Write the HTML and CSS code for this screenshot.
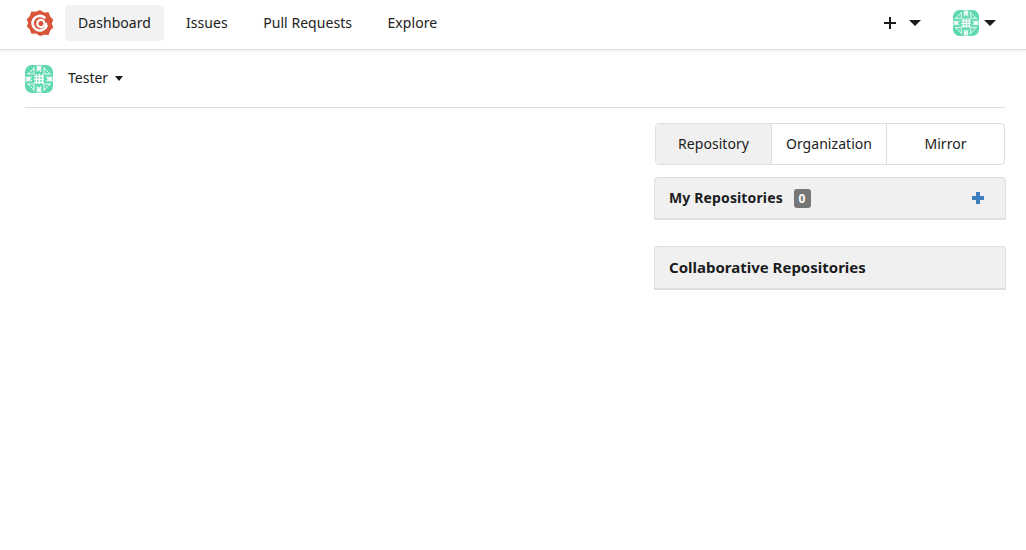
FILE: index.html
```html
<!DOCTYPE html>
<html lang="en">
<head>
  <meta charset="UTF-8" />
  <title>Dashboard</title>
  <link rel="stylesheet" href="styles.css">
</head>
<body>

<svg class="defs" width="0" height="0">
  <symbol id="avatar" viewBox="0 0 28 28">
    <rect width="28" height="28" rx="7" fill="#5fd9b0"/>
    <g id="avatar-quarter" fill="none" stroke="#fff" stroke-width="0.9">
      <path d="M9 2L9 9L2 9"/>
      <path d="M9 3L3 9"/>
      <path d="M0 12H7L3 16z" fill="#fff" opacity=".7"/>
      <path d="M12 0V7L16 3z" fill="#fff" opacity=".7"/>
    </g>
    <use href="#avatar-quarter" transform="matrix(-1 0 0 1 28 0)"/>
    <use href="#avatar-quarter" transform="matrix(1 0 0 -1 0 28)"/>
    <use href="#avatar-quarter" transform="matrix(-1 0 0 -1 28 28)"/>
    <g fill="#fff">
      <path d="M9 9h10v10H9z" opacity=".3"/>
      <path d="M11 9h1v10h-1zM14 9h1v10h-1zM17 9h1v10h-1z"/>
      <path d="M9 11h10v1H9zM9 14h10v1H9zM9 17h10v1H9z"/>
    </g>
  </symbol>
</svg>

<header class="navbar">
  <div class="nav-left">
    <svg class="logo" viewBox="0 0 28 28" width="28" height="28">
      <path fill="#d9553a" d="M14 1l4 2.400 4.600-.200 1.600 4.400 3 3.200-1.400 3.800 1.400 3.800-3 3.200-1.600 4.400-4.600-.200L14 27l-4-2.400-4.600.200-1.600-4.400-3-3.200L2.200 14 .800 10.200l3-3.200 1.600-4.400 4.600.200z"/>
      <path fill="none" stroke="#fff" stroke-width="2.600" stroke-linecap="round" d="M18.500 8.500A7.300 7.300 0 1 0 20.600 17"/>
      <path fill="none" stroke="#fff" stroke-width="2.200" stroke-linecap="round" d="M18.500 14.500a3.600 3.600 0 1 0-2 3.200l3.800-2.700"/>
    </svg>
    <a class="nav-item active" href="#">Dashboard</a>
    <a class="nav-item" href="#">Issues</a>
    <a class="nav-item" href="#">Pull Requests</a>
    <a class="nav-item" href="#">Explore</a>
  </div>
  <div class="nav-right">
    <div class="nav-create">
      <svg class="plus-icon" viewBox="0 0 14 14" width="14" height="14"><path d="M6 1h2v5h5v2H8v5H6V8H1V6h5z"/></svg>
      <span class="caret caret-big"></span>
    </div>
    <div class="nav-user">
      <svg class="avatar" width="26" height="26"><use href="#avatar"/></svg>
      <span class="caret caret-big"></span>
    </div>
  </div>
</header>

<div class="context-bar">
  <svg class="avatar" width="28" height="28"><use href="#avatar"/></svg>
  <span class="context-name">Tester</span>
  <span class="caret"></span>
</div>

<main class="dashboard">
  <div class="side">
    <div class="tabs">
      <a class="tab active" href="#">Repository</a>
      <a class="tab" href="#">Organization</a>
      <a class="tab" href="#">Mirror</a>
    </div>

    <div class="panel">
      <h4 class="panel-title">My Repositories <span class="count">0</span></h4>
      <svg class="add-icon" viewBox="0 0 14 14" width="14" height="14"><path d="M5 1h4v4h4v4H9v4H5V9H1V5h4z"/></svg>
    </div>

    <div class="panel panel-large">
      <h4 class="panel-title">Collaborative Repositories</h4>
    </div>
  </div>
</main>

</body>
</html>
```

FILE: styles.css
```css
:root {
  --text: rgb(33, 33, 33);
  --border: rgb(222, 222, 223);
  --surface: rgb(240, 240, 240);
}

body {
  margin: 0;
  font-family: 'Noto Sans', sans-serif;
  font-size: 14px;
  color: var(--text);
  background: #fff;
}

.defs {
  display: block;
  height: 0;
}

.navbar {
  display: flex;
  justify-content: space-between;
  align-items: center;
  height: 45px;
  padding: 0 30px 4px 26px;
  border-bottom: 1px solid var(--border);
  box-shadow: 0 1px 2px rgba(34, 36, 38, 0.1);
}

.nav-left,
.nav-right,
.nav-create,
.nav-user {
  display: flex;
  align-items: center;
}

.logo {
  margin-right: 11px;
}

.nav-item {
  color: var(--text);
  text-decoration: none;
  letter-spacing: 0.05px;
  padding: 0 13px;
  height: 36px;
  line-height: 36px;
  margin-right: 9.500px;
  border-radius: 4px;
}

.nav-item.active {
  background: rgb(242, 242, 242);
  margin-right: 9px;
}

.nav-create {
  margin-right: 32px;
}

.plus-icon {
  fill: #1b1c1d;
  margin-right: 12px;
}

.caret {
  display: inline-block;
  width: 0;
  height: 0;
  border-left: 4.500px solid transparent;
  border-right: 4.500px solid transparent;
  border-top: 5px solid #1b1c1d;
}

.caret-big {
  border-left-width: 6px;
  border-right-width: 6px;
  border-top-width: 6px;
}

.avatar {
  display: block;
  border-radius: 4px;
}

.nav-user .avatar {
  margin-right: 5px;
}

.context-bar {
  display: flex;
  align-items: center;
  height: 57px;
  margin: 0 21px 0 25px;
  border-bottom: 1px solid var(--border);
}

.context-name {
  margin: 0 7px 2px 15px;
}

.dashboard {
  display: flex;
  justify-content: flex-end;
  padding: 15px 20px 0 0;
}

.side {
  width: 352px;
}

.tabs {
  display: grid;
  grid-template-columns: 115px 115px 1fr;
  height: 40px;
  margin: 0 1px 12px;
  border: 1px solid var(--border);
  border-radius: 4px;
  overflow: hidden;
}

.tab {
  line-height: 40px;
  text-align: center;
  color: var(--text);
  text-decoration: none;
  letter-spacing: 0.05px;
  border-left: 1px solid var(--border);
}

.tab:first-child {
  border-left: none;
}

.tab.active {
  background: var(--surface);
}

.panel {
  display: flex;
  justify-content: space-between;
  align-items: center;
  height: 40px;
  padding: 0 20px 0 14px;
  margin-bottom: 26px;
  background: var(--surface);
  border: 1px solid var(--border);
  border-bottom-width: 2px;
  border-radius: 4px 4px 0 0;
}

.panel-title {
  margin: 0;
  font-size: 14px;
  font-weight: 700;
  letter-spacing: 0.13px;
  color: #1b1c1d;
}

.panel-large {
  height: 41px;
}

.panel-large .panel-title {
  font-size: 15px;
  letter-spacing: 0;
  margin-bottom: 2px;
}

.count {
  display: inline-block;
  min-width: 17px;
  height: 19px;
  margin-left: 7px;
  line-height: 19px;
  font-size: 12px;
  text-align: center;
  color: #fff;
  background: #767676;
  border-radius: 3px;
}

.add-icon {
  fill: #3f7fc1;
}
```
